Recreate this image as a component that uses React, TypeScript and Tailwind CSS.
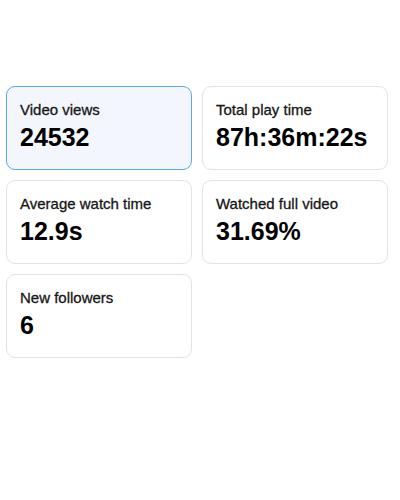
const stats = [
  { label: 'Video views', value: '24532', active: true },
  { label: 'Total play time', value: '87h:36m:22s' },
  { label: 'Average watch time', value: '12.9s' },
  { label: 'Watched full video', value: '31.69%' },
  { label: 'New followers', value: '6' },
];

export default function App() {
  return (
    <div className="h-[500px] w-[400px] bg-white pt-[86px] pl-[6px] pr-[12px] font-['Liberation_Sans',Arial,sans-serif]">
      <div className="grid grid-cols-2 gap-[10px]">
        {stats.map((s) => (
          <div
            key={s.label}
            className={`h-[84px] rounded-[9px] border px-[13px] pt-[12px] ${
              s.active ? 'border-[#5aa9f0] bg-[#f3f7fd]' : 'border-[#e3e3e3] bg-white'
            }`}
          >
            <div className="text-[15px] leading-[21px] text-[#161616] [-webkit-text-stroke:0.3px_#161616]">
              {s.label}
            </div>
            <div className="mt-[2px] text-[25px] leading-[30px] font-bold text-black">{s.value}</div>
          </div>
        ))}
      </div>
    </div>
  );
}
